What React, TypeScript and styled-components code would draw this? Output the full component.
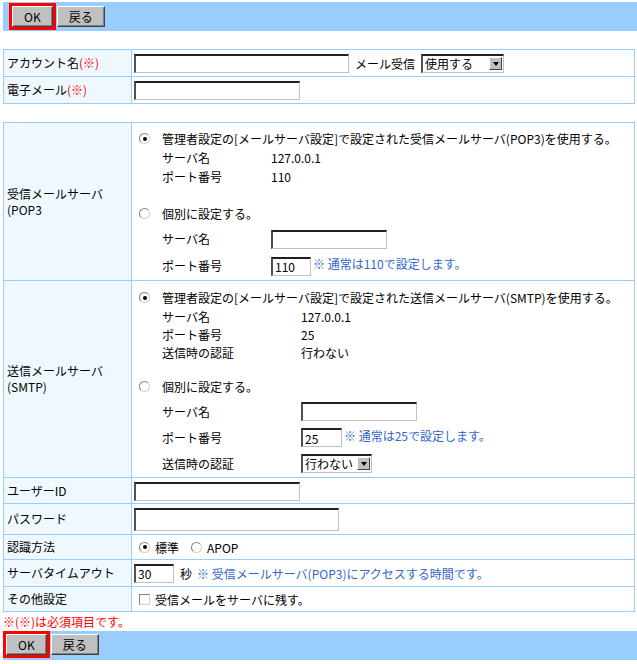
import React from 'react';
import styled, { createGlobalStyle } from 'styled-components';

const GlobalStyles = createGlobalStyle`
  body {
    margin: 0;
    background: #fff;
    color: #000;
    font-family: "Noto Sans CJK JP", "Liberation Sans", sans-serif;
    font-size: 12px;
  }
`;

const Page = styled.div`
  padding: 2px 0 4px 3px;
`;

const Bar = styled.div<{ $top?: boolean }>`
  display: flex;
  align-items: flex-start;
  height: 29px;
  background: #99ccff;
  padding: ${(p) => (p.$top ? '1px 0 0 6px' : '0')};
  box-sizing: border-box;
`;

const Focus = styled.div`
  border: 3px solid #ff0000;
  display: flex;
`;

const Button = styled.button`
  height: 21px;
  padding: 0 11px;
  background: #c0c0c0;
  border: 1px solid;
  border-color: #fff #404040 #404040 #fff;
  box-shadow: inset -1px -1px 0 #808080;
  font-family: inherit;
  font-size: 12px;
  line-height: 17px;
  color: #000;
`;

const BarButton = styled(Button)`
  margin: 3px 0 0 1px;
`;

const Table = styled.table<{ $gap: number }>`
  width: calc(100% - 2px);
  border-collapse: collapse;
  margin-top: ${(p) => p.$gap}px;
`;

const Row = styled.tr<{ $h?: number }>`
  height: ${(p) => p.$h ?? 26}px;
`;

const Label = styled.th`
  width: 122px;
  background: #f0f8ff;
  border: 1px solid #99ccff;
  text-align: left;
  font-weight: normal;
  padding: 0 2px 0 3px;
  vertical-align: middle;
  line-height: 16px;
`;

const Cell = styled.td<{ $pad?: number }>`
  border: 1px solid #99ccff;
  padding: 0 0 0 ${(p) => p.$pad ?? 2}px;
  vertical-align: middle;
`;

const Required = styled.span`
  color: #ff0000;
`;

const Field = styled.input<{ $w: number; $h?: number }>`
  width: ${(p) => p.$w}px;
  height: ${(p) => p.$h ?? 19}px;
  box-sizing: border-box;
  border-style: solid;
  border-width: 2px 1px 1px 2px;
  border-color: #202020 #c0c0c0 #c0c0c0 #505050;
  padding: 0 2px;
  margin: 0;
  font-family: inherit;
  font-size: 12px;
  vertical-align: middle;
  background: #fff;
`;

const Inline = styled.div`
  display: flex;
  align-items: center;
  gap: 6px;
`;

const Select = styled.span<{ $w: number }>`
  display: inline-flex;
  align-items: center;
  justify-content: space-between;
  width: ${(p) => p.$w}px;
  height: 19px;
  box-sizing: border-box;
  border-style: solid;
  border-width: 2px 1px 1px 2px;
  border-color: #202020 #c0c0c0 #c0c0c0 #505050;
  padding: 0 1px 0 2px;
  background: #fff;
`;

const SelectArrow = styled.span`
  width: 13px;
  height: 13px;
  box-sizing: border-box;
  background: #c0c0c0;
  border: 1px solid;
  border-color: #fff #404040 #404040 #fff;
  display: flex;
  align-items: center;
  justify-content: center;

  &::after {
    content: '';
    border-left: 3px solid transparent;
    border-right: 3px solid transparent;
    border-top: 4px solid #000;
  }
`;

const Radio = styled.span<{ $checked?: boolean }>`
  width: 11px;
  height: 11px;
  box-sizing: border-box;
  border-radius: 50%;
  border: 1px solid #808080;
  border-bottom-color: #d0d0d0;
  border-right-color: #d0d0d0;
  background: #fff;
  display: inline-flex;
  align-items: center;
  justify-content: center;
  flex: 0 0 auto;

  &::after {
    content: '';
    width: 4px;
    height: 4px;
    border-radius: 50%;
    background: ${(p) => (p.$checked ? '#000' : 'transparent')};
  }
`;

const Check = styled.span`
  width: 11px;
  height: 11px;
  box-sizing: border-box;
  border: 1px solid #808080;
  border-bottom-color: #d0d0d0;
  border-right-color: #d0d0d0;
  background: #fff;
  flex: 0 0 auto;
`;

const Choice = styled.div<{ $gap?: number; $mt?: number }>`
  display: flex;
  align-items: center;
  height: 19px;
  gap: ${(p) => p.$gap ?? 12}px;
  margin-top: ${(p) => p.$mt ?? 0}px;
`;

const ServerBox = styled.div<{ $top: number }>`
  padding: ${(p) => p.$top}px 0 1px 5px;
  display: flex;
  flex-direction: column;
`;

const Grid = styled.div<{ $col: number; $row: number; $mt?: number }>`
  display: grid;
  grid-template-columns: ${(p) => p.$col}px 1fr;
  grid-auto-rows: ${(p) => p.$row}px;
  align-items: center;
  padding-left: 23px;
  margin-top: ${(p) => p.$mt ?? 0}px;
`;

const Note = styled.span<{ $ml?: number }>`
  color: #3366cc;
  margin-left: ${(p) => p.$ml ?? 2}px;
`;

const Footnote = styled.div`
  color: #ff0000;
  height: 19px;
  line-height: 19px;
`;

const Buttons = ({ top }: { top?: boolean }) => (
  <Bar $top={top}>
    <Focus>
      <Button>OK</Button>
    </Focus>
    <BarButton>戻る</BarButton>
  </Bar>
);

export default function App() {
  return (
    <>
      <GlobalStyles />
      <Page>
        <Buttons top />

        <Table $gap={18}>
          <tbody>
            <Row $h={27}>
              <Label>
                アカウント名<Required>(※)</Required>
              </Label>
              <Cell>
                <Inline>
                  <Field $w={215} defaultValue="" />
                  <span>メール受信</span>
                  <Select $w={83}>
                    <span>使用する</span>
                    <SelectArrow />
                  </Select>
                </Inline>
              </Cell>
            </Row>
            <Row $h={27}>
              <Label>
                電子メール<Required>(※)</Required>
              </Label>
              <Cell>
                <Field $w={166} defaultValue="" />
              </Cell>
            </Row>
          </tbody>
        </Table>

        <Table $gap={18}>
          <tbody>
            <Row>
              <Label>
                受信メールサーバ
                <br />
                (POP3
              </Label>
              <Cell>
                <ServerBox $top={6}>
                  <Choice>
                    <Radio $checked />
                    <span>管理者設定の[メールサーバ設定]で設定された受信メールサーバ(POP3)を使用する。</span>
                  </Choice>
                  <Grid $col={109} $row={19}>
                    <span>サーバ名</span>
                    <span>127.0.0.1</span>
                    <span>ポート番号</span>
                    <span>110</span>
                  </Grid>
                  <Choice $mt={18}>
                    <Radio />
                    <span>個別に設定する。</span>
                  </Choice>
                  <Grid $col={109} $row={27} $mt={2}>
                    <span>サーバ名</span>
                    <span>
                      <Field $w={116} defaultValue="" />
                    </span>
                    <span>ポート番号</span>
                    <span>
                      <Field $w={40} defaultValue="110" />
                      <Note>※ 通常は110で設定します。</Note>
                    </span>
                  </Grid>
                </ServerBox>
              </Cell>
            </Row>
            <Row>
              <Label>
                送信メールサーバ
                <br />
                (SMTP)
              </Label>
              <Cell>
                <ServerBox $top={7}>
                  <Choice>
                    <Radio $checked />
                    <span>管理者設定の[メールサーバ設定]で設定された送信メールサーバ(SMTP)を使用する。</span>
                  </Choice>
                  <Grid $col={139} $row={18}>
                    <span>サーバ名</span>
                    <span>127.0.0.1</span>
                    <span>ポート番号</span>
                    <span>25</span>
                    <span>送信時の認証</span>
                    <span>行わない</span>
                  </Grid>
                  <Choice $mt={16}>
                    <Radio />
                    <span>個別に設定する。</span>
                  </Choice>
                  <Grid $col={139} $row={26} $mt={2}>
                    <span>サーバ名</span>
                    <span>
                      <Field $w={116} defaultValue="" />
                    </span>
                    <span>ポート番号</span>
                    <span>
                      <Field $w={41} defaultValue="25" />
                      <Note>※ 通常は25で設定します。</Note>
                    </span>
                    <span>送信時の認証</span>
                    <span>
                      <Select $w={71}>
                        <span>行わない</span>
                        <SelectArrow />
                      </Select>
                    </span>
                  </Grid>
                </ServerBox>
              </Cell>
            </Row>
            <Row $h={26}>
              <Label>ユーザーID</Label>
              <Cell>
                <Field $w={166} defaultValue="" />
              </Cell>
            </Row>
            <Row $h={31}>
              <Label>パスワード</Label>
              <Cell>
                <Field $w={205} $h={23} type="password" defaultValue="" />
              </Cell>
            </Row>
            <Row $h={25}>
              <Label>認識方法</Label>
              <Cell $pad={7}>
                <Choice $gap={5}>
                  <Radio $checked />
                  <span>標準</span>
                  <Radio style={{ marginLeft: 7 }} />
                  <span>APOP</span>
                </Choice>
              </Cell>
            </Row>
            <Row $h={27}>
              <Label>サーバタイムアウト</Label>
              <Cell>
                <Inline>
                  <Field $w={40} defaultValue="30" />
                  <span>
                    秒<Note $ml={5}>※ 受信メールサーバ(POP3)にアクセスする時間です。</Note>
                  </span>
                </Inline>
              </Cell>
            </Row>
            <Row $h={25}>
              <Label>その他設定</Label>
              <Cell $pad={7}>
                <Choice $gap={5}>
                  <Check />
                  <span>受信メールをサーバに残す。</span>
                </Choice>
              </Cell>
            </Row>
          </tbody>
        </Table>

        <Footnote>※(※)は必須項目です。</Footnote>
        <Buttons />
      </Page>
    </>
  );
}
